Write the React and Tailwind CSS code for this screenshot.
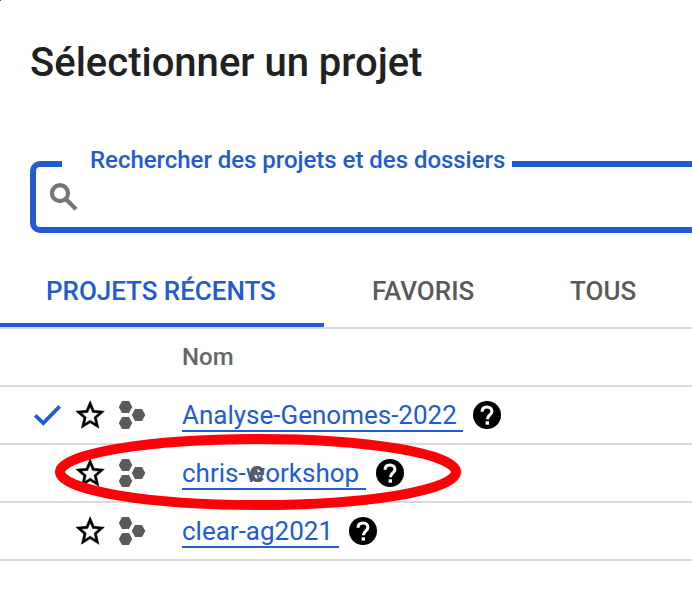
const projects = [
  { name: "Analyse-Genomes-2022", width: "w-[281px]", current: true },
  { name: "chris-workshop", width: "w-[184px]" },
  { name: "clear-ag2021", width: "w-[157px]" },
];

function SearchIcon() {
  return (
    <svg viewBox="0 0 28 28" className="size-7 shrink-0" fill="none" stroke="#757575" strokeWidth="4.2">
      <circle cx="10" cy="10.2" r="8" />
      <path d="M15.6 15.8L26 26.2" />
    </svg>
  );
}

function CheckIcon() {
  return (
    <svg viewBox="0 0 36 36" className="size-9" fill="none" stroke="#225bd1" strokeWidth="3.7">
      <path d="M6.2 18.4L14.3 26.1L30.7 9.4" />
    </svg>
  );
}

function StarIcon() {
  return (
    <svg viewBox="0 0 30 30" className="size-[30px] shrink-0" fill="#000" stroke="#000" strokeWidth="0.35">
      <path
        transform="translate(-1.9 -2.2) scale(1.42 1.45)"
        d="M22 9.24l-7.19-.62L12 2 9.19 8.63 2 9.24l5.46 4.73L5.82 21 12 17.27 18.18 21l-1.63-7.03L22 9.24zM12 15.4l-3.76 2.27 1-4.28-3.32-2.88 4.38-.38L12 6.1l1.71 4.04 4.38.38-3.32 2.88 1 4.28L12 15.4z"
      />
    </svg>
  );
}

function HexagonsIcon() {
  return (
    <svg viewBox="0 0 27 28" className="ml-[14px] h-7 w-[27px] shrink-0" fill="#5a5a5a">
      <path d="M3 0h7l3.3 6-3.3 6H3L-.2 6zM3 16h7l3.3 6-3.3 6H3L-.2 22zM16 8h7l3.3 6-3.3 6h-7l-3.2-6z" />
    </svg>
  );
}

function HelpIcon() {
  return (
    <svg viewBox="0 0 28 28" className="ml-[10px] size-7 shrink-0" fill="none">
      <circle cx="14" cy="14" r="14" fill="#000" />
      <path d="M9.1 10.8C9.1 7.8 11.1 6 14 6s4.9 1.7 4.9 4.4c0 3.5-4.5 3.7-4.5 7.9" stroke="#fff" strokeWidth="3.1" />
      <path d="M12.6 20.3h3.4v3.4h-3.4z" fill="#fff" />
    </svg>
  );
}

function ProjectRow({ project }) {
  return (
    <div className="flex h-[58px] items-center border-b-2 border-[#dadada]">
      <div className="flex w-[75px] shrink-0 pl-[29px]">{project.current && <CheckIcon />}</div>
      <StarIcon />
      <HexagonsIcon />
      <a className={`ml-9 h-[34px] border-b-2 border-[#225bd1] text-[26px] leading-[34px] text-[#225bd1] ${project.width}`}>
        {project.name}
      </a>
      <HelpIcon />
    </div>
  );
}

export default function App() {
  return (
    <main className="relative h-[592px] w-[692px] overflow-hidden bg-white font-[Roboto,sans-serif]">
      <span className="absolute left-0 top-0 size-px bg-[#555]" />
      <h1 className="h-[161px] pl-[30px] pt-[39px] text-[40px] font-medium leading-[48px] text-[#212121]">
        Sélectionner un projet
      </h1>

      <div className="ml-[30px] flex h-[72px]">
        <div className="flex w-8 shrink-0 items-center rounded-l-[10px] border-y-[6px] border-l-[6px] border-[#225bd1] pl-[14px]">
          <SearchIcon />
        </div>
        <div className="w-[450px] shrink-0 border-b-[6px] border-[#225bd1] pl-7">
          <div className="-mt-4 whitespace-nowrap text-[24px] font-medium leading-[30px] tracking-[-0.03px] text-[#225bd1]">
            Rechercher des projets et des dossiers
          </div>
        </div>
        <div className="flex-1 border-y-[6px] border-[#225bd1]" />
      </div>

      <nav className="flex h-24 border-b-2 border-[#dadada] text-[26px] font-medium leading-[32px] text-[#5a5a5a]">
        <div className="w-[324px] shrink-0 border-b-4 border-[#225bd1] pl-[46px] pt-[42px] tracking-[-0.03px] text-[#225bd1]">PROJETS RÉCENTS</div>
        <div className="w-[246px] shrink-0 pl-12 pt-[42px]">FAVORIS</div>
        <div className="pt-[42px]">TOUS</div>
      </nav>

      <div className="flex h-[58px] items-center border-b-2 border-[#dadada] pl-[182px] text-[24px] font-medium text-[#666]">
        Nom
      </div>
      {projects.map((project) => (
        <ProjectRow key={project.name} project={project} />
      ))}

      <span className="absolute left-[249px] top-[456px] text-[29px] font-bold leading-[32px] text-[#5a5a5a]">e</span>
      <svg viewBox="0 0 406 76" className="absolute left-[55px] top-[434px] h-[76px] w-[406px]">
        <ellipse cx="203" cy="38" rx="198" ry="33" fill="none" stroke="#ff0008" strokeWidth="10" />
      </svg>
    </main>
  );
}
